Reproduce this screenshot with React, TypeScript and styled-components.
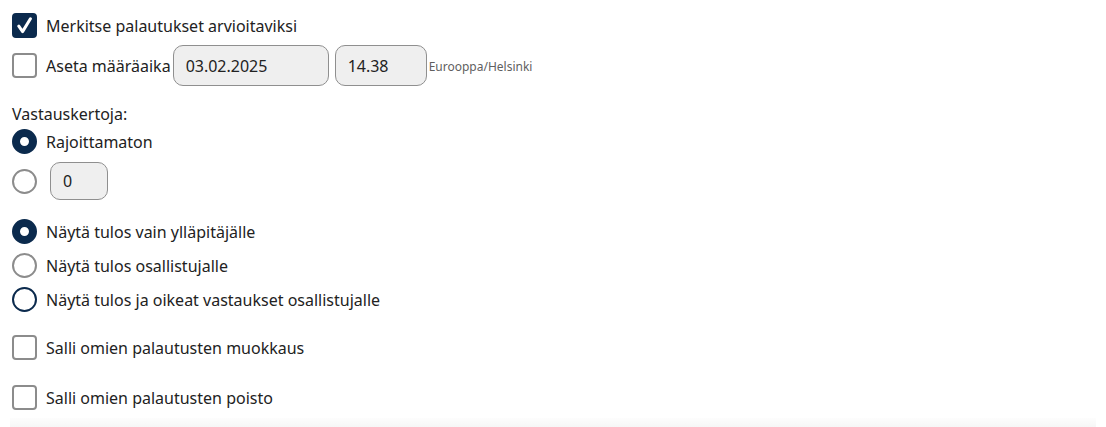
import React from "react";
import styled, { createGlobalStyle } from "styled-components";

const GlobalStyle = createGlobalStyle`
  body {
    margin: 0;
    background: #ffffff;
    font-family: "Noto Sans", "Open Sans", sans-serif;
    color: #222222;
  }
`;

const navy = "#0b2a4d";

const Page = styled.div`
  width: 1106px;
  height: 427px;
  display: flex;
  flex-direction: column;
  overflow: hidden;
`;

const Form = styled.div`
  display: flex;
  flex-direction: column;
  padding: 13px 12px 0 12px;
  flex: 1;
`;

const Row = styled.label<{ $mt?: number }>`
  display: flex;
  align-items: center;
  gap: 9px;
  min-height: 24px;
  margin-top: ${(p) => p.$mt ?? 0}px;
  font-size: 16px;
  line-height: 24px;
`;

const Box = styled.span<{ $checked?: boolean }>`
  box-sizing: border-box;
  width: 25px;
  height: 25px;
  flex: none;
  border-radius: 4px;
  border: 2px solid ${(p) => (p.$checked ? navy : "#8c8c8c")};
  background: ${(p) => (p.$checked ? navy : "#ffffff")};
  display: flex;
  align-items: center;
  justify-content: center;
`;

const Circle = styled.span<{ $checked?: boolean; $focus?: boolean }>`
  box-sizing: border-box;
  width: 25px;
  height: 25px;
  flex: none;
  border-radius: 50%;
  border: ${(p) => (p.$checked ? "8px" : "2px")} solid
    ${(p) => (p.$checked || p.$focus ? navy : "#8c8c8c")};
  background: #ffffff;
`;

const Field = styled.input<{ $w: number; $h?: number }>`
  box-sizing: border-box;
  width: ${(p) => p.$w}px;
  height: ${(p) => p.$h ?? 41}px;
  border: 1px solid #8f8f8f;
  border-radius: 10px;
  background: #efefef;
  padding: 0 12px;
  font-family: "Noto Sans", "Open Sans", sans-serif;
  font-size: 16px;
  color: #222222;
  outline: none;
`;

const Inline = styled.div`
  display: flex;
  align-items: center;
  gap: 6px;
`;

const Prefix = styled.span`
  margin-right: -4px;
`;

const Zone = styled.span`
  font-size: 12px;
  color: #5f5f5f;
  margin-left: -4px;
  margin-top: 2px;
`;

const Heading = styled.div`
  font-size: 16px;
  line-height: 24px;
  margin-top: 16px;
  margin-bottom: 3px;
`;

const CountField = styled(Field)`
  margin-left: 4px;
`;

const Footer = styled.div`
  height: 9px;
  margin: 0 10px;
  background: linear-gradient(#fdfdfd, #f6f6f6);
`;

const Check = () => (
  <svg width="17" height="17" viewBox="0 0 17 17">
    <path
      d="M2.8 9.2 L6.6 14.6 L14.4 1.8"
      fill="none"
      stroke="#ffffff"
      strokeWidth="3"
      strokeLinecap="round"
      strokeLinejoin="round"
    />
  </svg>
);

export default function App() {
  return (
    <Page>
      <GlobalStyle />
      <Form>
        <Row>
          <Box $checked>
            <Check />
          </Box>
          Merkitse palautukset arvioitaviksi
        </Row>
        <Row $mt={7}>
          <Box />
          <Inline>
            <Prefix>Aseta määräaika</Prefix>
            <Field $w={156} readOnly value="03.02.2025" />
            <Field $w={92} readOnly value="14.38" />
            <Zone>Eurooppa/Helsinki</Zone>
          </Inline>
        </Row>

        <Heading>Vastauskertoja:</Heading>
        <Row>
          <Circle $checked />
          Rajoittamaton
        </Row>
        <Row $mt={8}>
          <Circle />
          <CountField $w={58} $h={38} readOnly value="0" />
        </Row>

        <Row $mt={19}>
          <Circle $checked />
          Näytä tulos vain ylläpitäjälle
        </Row>
        <Row $mt={9}>
          <Circle />
          Näytä tulos osallistujalle
        </Row>
        <Row $mt={9}>
          <Circle $focus />
          Näytä tulos ja oikeat vastaukset osallistujalle
        </Row>

        <Row $mt={23}>
          <Box />
          Salli omien palautusten muokkaus
        </Row>
        <Row $mt={25}>
          <Box />
          Salli omien palautusten poisto
        </Row>
      </Form>
      <Footer />
    </Page>
  );
}
